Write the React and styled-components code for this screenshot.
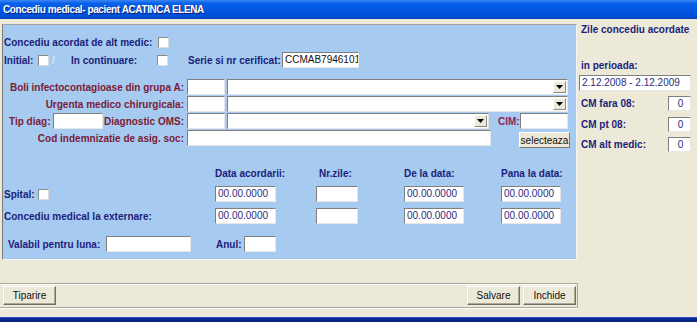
import React from 'react';
import styled, { createGlobalStyle } from 'styled-components';

const Global = createGlobalStyle`
  body { margin: 0; background: #ece9d8; }
  * { box-sizing: border-box; }
`;

const Window = styled.div`
  width: 697px;
  height: 322px;
  overflow: hidden;
  display: flex;
  flex-direction: column;
  background: #ece9d8;
  font-family: 'Liberation Sans', Arial, sans-serif;
`;

const TitleBar = styled.div`
  height: 19px;
  flex: none;
  display: flex;
  align-items: center;
  padding-left: 3px;
  color: #fff;
  font-weight: bold;
  font-size: 10px;
  letter-spacing: -0.4px;
  text-shadow: 1px 1px 0 #0a1e6e;
  background: linear-gradient(to bottom, #3b86f2 0%, #0860e8 18%, #0055e2 55%, #004fd6 85%, #0a45c0 100%);
`;

const Body = styled.div`
  height: 298px;
  flex: none;
  display: flex;
`;

const LeftCol = styled.div`
  width: 578px;
  flex: none;
  display: flex;
  flex-direction: column;
  padding-top: 5px;
`;

const Panel = styled.div`
  margin-left: 2px;
  width: 575px;
  height: 236px;
  flex: none;
  background: #a6caf0;
  border: 1px solid;
  border-color: #a4a4a4 #f4f4f4 #f4f4f4 #7c7c7c;
  display: flex;
  flex-direction: column;
`;

const Row = styled.div`
  display: flex;
  align-items: center;
  height: 16px;
  flex: none;
  margin-top: ${p => p.$mt || 0}px;
  padding-left: ${p => p.$pl || 0}px;
`;

const Label = styled.div`
  width: ${p => (p.$w ? `${p.$w}px` : 'auto')};
  flex: none;
  font-size: 10px;
  font-weight: bold;
  white-space: nowrap;
  text-align: ${p => p.$align || 'left'};
  padding-left: ${p => p.$pl || 0}px;
  color: ${p => (p.$tone === 'red' ? '#7b1b36' : p.$tone === 'mag' ? '#93205a' : '#1d1d7a')};
`;

const Gap = styled.div`
  width: ${p => p.$w}px;
  flex: none;
`;

const Check = styled.div`
  width: 11px;
  height: 11px;
  flex: none;
  background: #fff;
  border: 1px solid;
  border-color: #8a8a8a #dcdcdc #dcdcdc #8a8a8a;
`;

const Slash = styled.span`
  font-size: 10px;
  color: #eef2fa;
  width: 22px;
  padding-left: 3px;
  flex: none;
`;

const Field = styled.div`
  width: ${p => p.$w}px;
  height: ${p => p.$h || 16}px;
  flex: none;
  background: #fff;
  border: 1px solid;
  border-color: #7f7f7f #e6e6e6 #e6e6e6 #7f7f7f;
  font-size: 10px;
  line-height: ${p => (p.$h || 16) - 2}px;
  padding-left: 2px;
  color: ${p => p.$color || '#2b2b7a'};
  white-space: nowrap;
  overflow: hidden;
  display: flex;
  justify-content: ${p => (p.$align === 'center' ? 'center' : 'flex-start')};
`;

const Combo = styled(Field)`
  justify-content: flex-end;
  align-items: center;
  padding: 1px;
`;

const ArrowBtn = styled.div`
  width: 13px;
  height: 12px;
  background: #ece9d8;
  border: 1px solid;
  border-color: #fff #8a8a8a #8a8a8a #fff;
  display: flex;
  align-items: center;
  justify-content: center;
`;

const SmallBtn = styled.div`
  width: ${p => p.$w}px;
  height: 16px;
  flex: none;
  margin-top: ${p => p.$mt || 0}px;
  background: #ece9d8;
  border: 1px solid;
  border-color: #fff #7a7a72 #7a7a72 #fff;
  font-size: 10px;
  color: #111;
  display: flex;
  align-items: center;
  justify-content: center;
`;

const Grid = styled.div`
  display: grid;
  grid-template-columns: 212px 101px 88px 97px 1fr;
  align-items: center;
  height: ${p => p.$h || 16}px;
  margin-top: ${p => p.$mt || 0}px;
  flex: none;
`;

const Toolbar = styled.div`
  margin-top: 23px;
  height: 25px;
  flex: none;
  display: flex;
  align-items: center;
  padding: 0 1px 0 3px;
  border-top: 1px solid #aca899;
  border-bottom: 1px solid #aca899;
  border-right: 1px solid #aca899;
  box-shadow: inset 0 1px 0 #fff, 0 1px 0 #fff;
`;

const Button = styled.button`
  width: 53px;
  height: 19px;
  padding: 0;
  margin-left: ${p => p.$ml || 0};
  background: #ece9d8;
  border: 1px solid;
  border-color: #fff #716f64 #716f64 #fff;
  box-shadow: inset -1px -1px 0 #aca899;
  font-family: 'Liberation Sans', Arial, sans-serif;
  font-size: 10px;
  color: #111;
`;

const RightCol = styled.div`
  flex: 1;
  display: flex;
  flex-direction: column;
  padding: 4px 0 0 3px;
`;

const SideTitle = styled(Label)`
  line-height: 14px;
  margin-top: ${p => p.$mt || 0}px;
`;

const SideRow = styled.div`
  display: flex;
  align-items: center;
  justify-content: space-between;
  height: 15px;
  width: 110px;
  margin-top: ${p => p.$mt || 0}px;
`;

const PeriodField = styled(Field)`
  margin-left: -2px;
  margin-top: 2px;
`;

const BottomStrip = styled.div`
  flex: 1;
  background: linear-gradient(to bottom, #3a5fd0 0%, #0a2a9a 30%, #0a2278 100%);
`;

const Arrow = () => (
  <ArrowBtn>
    <svg width="7" height="4" viewBox="0 0 7 4">
      <polygon points="0,0 7,0 3.5,4" fill="#000" />
    </svg>
  </ArrowBtn>
);

const DateCells = () => (
  <>
    <Field $w={61}>00.00.0000</Field>
    <Field $w={42} />
    <Field $w={60}>00.00.0000</Field>
    <Field $w={60}>00.00.0000</Field>
  </>
);

export default function App() {
  return (
    <Window>
      <Global />
      <TitleBar>Concediu medical- pacient ACATINCA ELENA</TitleBar>
      <Body>
        <LeftCol>
          <Panel>
            <Row $mt={9} $pl={1}>
              <Label $w={154}>Concediu acordat de alt medic:</Label>
              <Check />
            </Row>
            <Row $mt={2} $pl={1}>
              <Label $w={34}>Initial:</Label>
              <Check />
              <Slash>/</Slash>
              <Label $w={86}>In continuare:</Label>
              <Check />
              <Gap $w={20} />
              <Label $w={94}>Serie si nr cerificat:</Label>
              <Field $w={77} $color="#111">CCMAB7946101</Field>
            </Row>
            <Row $mt={11}>
              <Label $w={181} $align="right" $tone="red">Boli infectocontagioase din grupa A:</Label>
              <Gap $w={3} />
              <Field $w={38} />
              <Gap $w={2} />
              <Combo $w={341}><Arrow /></Combo>
            </Row>
            <Row $mt={1}>
              <Label $w={181} $align="right" $tone="red">Urgenta medico chirurgicala:</Label>
              <Gap $w={3} />
              <Field $w={38} />
              <Gap $w={2} />
              <Combo $w={341}><Arrow /></Combo>
            </Row>
            <Row $mt={1} $pl={6}>
              <Label $w={44} $tone="red">Tip diag:</Label>
              <Field $w={50} />
              <Label $w={81} $align="right" $tone="red">Diagnostic OMS:</Label>
              <Gap $w={3} />
              <Field $w={38} />
              <Gap $w={2} />
              <Combo $w={262}><Arrow /></Combo>
              <Gap $w={9} />
              <Label $w={22} $tone="mag">CIM:</Label>
              <Field $w={48} />
            </Row>
            <Row $mt={1}>
              <Label $w={181} $align="right" $tone="red">Cod indemnizatie de asig. soc:</Label>
              <Gap $w={3} />
              <Field $w={304} />
              <Gap $w={28} />
              <SmallBtn $w={51} $mt={4}>selecteaza</SmallBtn>
            </Row>
            <Grid $mt={20} $h={14}>
              <span />
              <Label>Data acordarii:</Label>
              <Label $pl={3}>Nr.zile:</Label>
              <Label>De la data:</Label>
              <Label>Pana la data:</Label>
            </Grid>
            <Grid $mt={6}>
              <Row $pl={1}>
                <Label $w={34}>Spital:</Label>
                <Check />
              </Row>
              <DateCells />
            </Grid>
            <Grid $mt={6}>
              <Label $pl={1}>Concediu medical la externare:</Label>
              <DateCells />
            </Grid>
            <Row $mt={12} $pl={5}>
              <Label $w={98}>Valabil pentru luna:</Label>
              <Field $w={85} />
              <Gap $w={25} />
              <Label $w={28}>Anul:</Label>
              <Field $w={32} />
            </Row>
          </Panel>
          <Toolbar>
            <Button>Tiparire</Button>
            <Button $ml="auto">Salvare</Button>
            <Button $ml="3px">Inchide</Button>
          </Toolbar>
        </LeftCol>
        <RightCol>
          <SideTitle>Zile concediu acordate</SideTitle>
          <SideTitle $mt={22}>in perioada:</SideTitle>
          <PeriodField $w={112}>2.12.2008 - 2.12.2009</PeriodField>
          <SideRow $mt={5}>
            <Label>CM fara 08:</Label>
            <Field $w={23} $h={15} $align="center">0</Field>
          </SideRow>
          <SideRow $mt={6}>
            <Label>CM pt 08:</Label>
            <Field $w={23} $h={15} $align="center">0</Field>
          </SideRow>
          <SideRow $mt={5}>
            <Label>CM alt medic:</Label>
            <Field $w={23} $h={15} $align="center">0</Field>
          </SideRow>
        </RightCol>
      </Body>
      <BottomStrip />
    </Window>
  );
}
